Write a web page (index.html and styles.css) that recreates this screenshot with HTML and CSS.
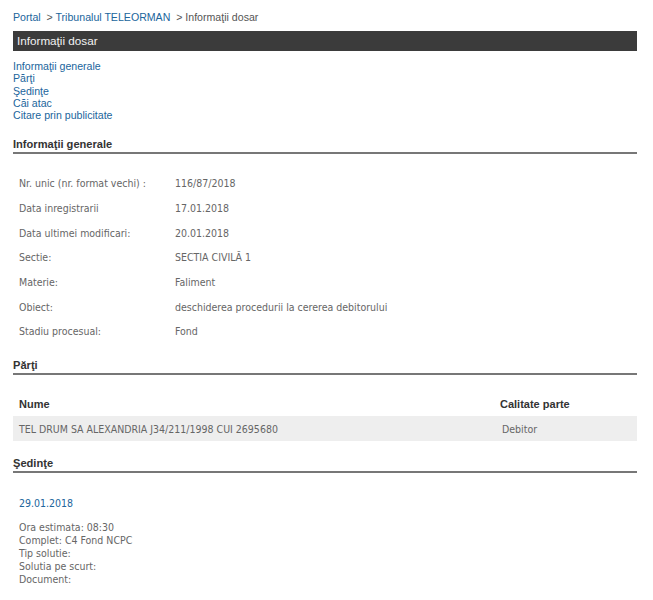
FILE: index.html
```html
<!DOCTYPE html>
<html>
<head>
<meta charset="utf-8">
<link rel="stylesheet" href="styles.css">
</head>
<body>
<div class="page">
  <div class="crumbs"><a class="lnk">Portal</a>&nbsp; &gt; <a class="lnk">Tribunalul TELEORMAN</a>&nbsp; &gt; Informaţii dosar</div>
  <div class="bar">Informaţii dosar</div>
  <div class="menu">
    <a class="lnk">Informaţii generale</a>
    <a class="lnk">Părţi</a>
    <a class="lnk">Şedinţe</a>
    <a class="lnk">Căi atac</a>
    <a class="lnk">Citare prin publicitate</a>
  </div>

  <h2 class="sec sec-gen">Informaţii generale</h2>
  <div class="info">
    <div class="row"><span class="lab">Nr. unic (nr. format vechi) :</span><span class="val">116/87/2018</span></div>
    <div class="row"><span class="lab">Data inregistrarii</span><span class="val">17.01.2018</span></div>
    <div class="row"><span class="lab">Data ultimei modificari:</span><span class="val">20.01.2018</span></div>
    <div class="row"><span class="lab">Sectie:</span><span class="val">SECTIA CIVILĂ 1</span></div>
    <div class="row"><span class="lab">Materie:</span><span class="val">Faliment</span></div>
    <div class="row"><span class="lab">Obiect:</span><span class="val">deschiderea procedurii la cererea debitorului</span></div>
    <div class="row"><span class="lab">Stadiu procesual:</span><span class="val">Fond</span></div>
  </div>

  <h2 class="sec sec-parti">Părţi</h2>
  <div class="parti">
    <div class="phead"><span class="c1">Nume</span><span class="c2">Calitate parte</span></div>
    <div class="prow"><span class="c1">TEL DRUM SA ALEXANDRIA J34/211/1998 CUI 2695680</span><span class="c2">Debitor</span></div>
  </div>

  <h2 class="sec sec-sed">Şedinţe</h2>
  <div class="sed">
    <div class="date">29.01.2018</div>
    <div class="det">
      <div>Ora estimata: 08:30</div>
      <div>Complet: C4 Fond NCPC</div>
      <div>Tip solutie:</div>
      <div>Solutia pe scurt:</div>
      <div>Document:</div>
    </div>
  </div>
</div>
</body>
</html>
```
FILE: styles.css
```css
html, body {
  margin: 0;
  padding: 0;
  background: #fff;
}
.page {
  width: 624px;
  margin-left: 13px;
  font-family: "Liberation Sans", Arial, sans-serif;
  font-size: 10.6px;
  color: #555;
}
.lnk {
  color: #21659c;
  text-decoration: none;
}
.crumbs {
  padding-top: 10px;
  line-height: 14px;
  color: #555;
}
.bar {
  margin-top: 7px;
  height: 20px;
  line-height: 20px;
  background: #3b3b3b;
  color: #f2f2f2;
  font-size: 11.7px;
  padding-left: 4px;
}
.menu {
  margin-top: 9px;
  display: flex;
  flex-direction: column;
  line-height: 12.25px;
}
.sec {
  margin: 0;
  font-size: 11.1px;
  font-weight: bold;
  color: #333;
  line-height: 14px;
  padding-bottom: 1px;
  border-bottom: 2px solid #777;
}
.sec-gen { margin-top: 16px; }
.info {
  padding-top: 17px;
  padding-left: 6px;
  font-family: "DejaVu Sans Condensed", "DejaVu Sans", sans-serif;
  font-size: 10.5px;
  color: #666;
}
.row {
  display: flex;
  height: 24.67px;
  line-height: 24.67px;
}
.lab { width: 156px; }
.sec-parti { margin-top: 14px; }
.parti {
  padding-top: 19px;
}
.phead {
  display: flex;
  height: 22px;
  line-height: 20px;
  font-weight: bold;
  color: #333;
  font-size: 11px;
}
.prow {
  display: flex;
  height: 25px;
  line-height: 26px;
  background: #eeeeee;
  font-family: "DejaVu Sans Condensed", "DejaVu Sans", sans-serif;
  font-size: 10.5px;
  color: #666;
}
.c1 { width: 481px; padding-left: 6px; }
.c2 { flex: 1; }
.prow .c2 { padding-left: 2px; }
.sec-sed { margin-top: 15px; }
.sed {
  padding-left: 6px;
  font-family: "DejaVu Sans Condensed", "DejaVu Sans", sans-serif;
  font-size: 10.5px;
  color: #666;
}
.date {
  margin-top: 23px;
  color: #21659c;
  line-height: 14px;
}
.det {
  margin-top: 11px;
  line-height: 13px;
}
```
